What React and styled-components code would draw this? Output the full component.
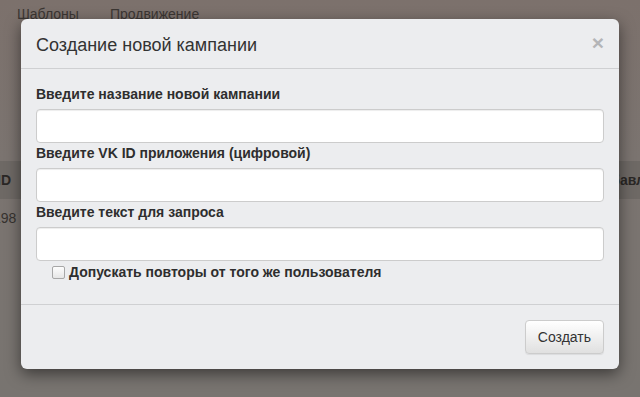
import React from 'react';
import styled, { createGlobalStyle } from 'styled-components';

const GlobalStyle = createGlobalStyle`
  html, body {
    margin: 0;
    padding: 0;
    height: 100%;
  }
  body {
    background: linear-gradient(#7c716c, #7b7470 40%, #787470);
    font-family: "Liberation Sans", Arial, sans-serif;
    font-size: 14px;
    color: #333;
    overflow: hidden;
  }
`;

const Page = styled.div`
  height: 397px;
  position: relative;
`;

const Nav = styled.div`
  display: flex;
  gap: 31px;
  padding: 4px 0 0 17px;
  height: 30px;
  line-height: 20px;
  color: #3b3633;
`;

const Table = styled.div`
  margin-top: 127px;
`;

const HeadRow = styled.div`
  display: flex;
  justify-content: space-between;
  align-items: center;
  height: 38px;
  background: #6e6965;
  font-weight: bold;
  color: #2a2725;
`;

const BodyRow = styled.div`
  display: flex;
  align-items: center;
  height: 38px;
  color: #36322f;
`;

const Cell = styled.span`
  margin-left: ${p => p.offset || 0}px;
  margin-right: ${p => p.right || 0}px;
`;

const Backdrop = styled.div`
  position: absolute;
  inset: 0;
  display: flex;
  justify-content: center;
  align-items: flex-start;
  padding-top: 19px;
`;

const Modal = styled.div`
  width: 598px;
  background: #ecedef;
  border-radius: 6px;
  box-shadow: 0 5px 15px rgba(0, 0, 0, 0.5);
  background-clip: padding-box;
`;

const Header = styled.div`
  display: flex;
  justify-content: space-between;
  align-items: center;
  padding: 14px 15px 10px 15px;
  height: 25px;
  border-bottom: 1px solid #cfd0d2;
`;

const Title = styled.h4`
  margin: 0;
  font-size: 18px;
  font-weight: normal;
  line-height: 25px;
  color: #333;
`;

const Close = styled.button`
  border: 0;
  background: none;
  padding: 0;
  font-family: "Liberation Sans", Arial, sans-serif;
  font-size: 21px;
  font-weight: bold;
  line-height: 1;
  color: #b4b5b7;
  margin-right: 0;
  margin-top: -6px;
`;

const Body = styled.div`
  padding: 15px 15px 22px;
`;

const Label = styled.label`
  display: block;
  font-weight: bold;
  line-height: 20px;
  margin-bottom: 5px;
  color: #2e2e2e;
`;

const Input = styled.input`
  display: block;
  box-sizing: border-box;
  width: 100%;
  height: 34px;
  margin: 0;
  padding: 6px 12px;
  border: 1px solid #ccc;
  border-radius: 4px;
  background: #fff;
  box-shadow: inset 0 1px 1px rgba(0, 0, 0, 0.075);
  font-family: inherit;
  font-size: 14px;
`;

const CheckRow = styled.label`
  display: flex;
  align-items: center;
  gap: 4px;
  padding-left: 16px;
  padding-top: 1px;
  line-height: 20px;
  font-weight: bold;
  color: #2e2e2e;
`;

const Box = styled.span`
  width: 11px;
  height: 11px;
  border: 1px solid #a7a7a7;
  border-radius: 2px;
  background: linear-gradient(#fdfdfd, #e6e6e6);
`;

const Footer = styled.div`
  display: flex;
  justify-content: flex-end;
  padding: 15px;
  border-top: 1px solid #cfd0d2;
`;

const Button = styled.button`
  height: 34px;
  padding: 6px 12px;
  border: 1px solid #ccc;
  border-radius: 4px;
  background: linear-gradient(#fff, #e0e0e0);
  box-shadow: inset 0 1px 0 rgba(255, 255, 255, 0.15), 0 1px 1px rgba(0, 0, 0, 0.075);
  font-family: inherit;
  font-size: 14px;
  color: #333;
`;

const fields = [
  'Введите название новой кампании',
  'Введите VK ID приложения (цифровой)',
  'Введите текст для запроса',
];

export default function App() {
  return (
    <Page>
      <GlobalStyle />
      <Nav>
        <span>Шаблоны</span>
        <span>Продвижение</span>
      </Nav>
      <Table>
        <HeadRow>
          <Cell offset={-3}>ID</Cell>
          <Cell right={-5}>Добавл</Cell>
        </HeadRow>
        <BodyRow>
          <Cell offset={-7}>198</Cell>
        </BodyRow>
      </Table>

      <Backdrop>
        <Modal>
          <Header>
            <Title>Создание новой кампании</Title>
            <Close>×</Close>
          </Header>
          <Body>
            {fields.map(text => (
              <div key={text}>
                <Label>{text}</Label>
                <Input type="text" />
              </div>
            ))}
            <CheckRow>
              <Box />
              Допускать повторы от того же пользователя
            </CheckRow>
          </Body>
          <Footer>
            <Button>Создать</Button>
          </Footer>
        </Modal>
      </Backdrop>
    </Page>
  );
}
